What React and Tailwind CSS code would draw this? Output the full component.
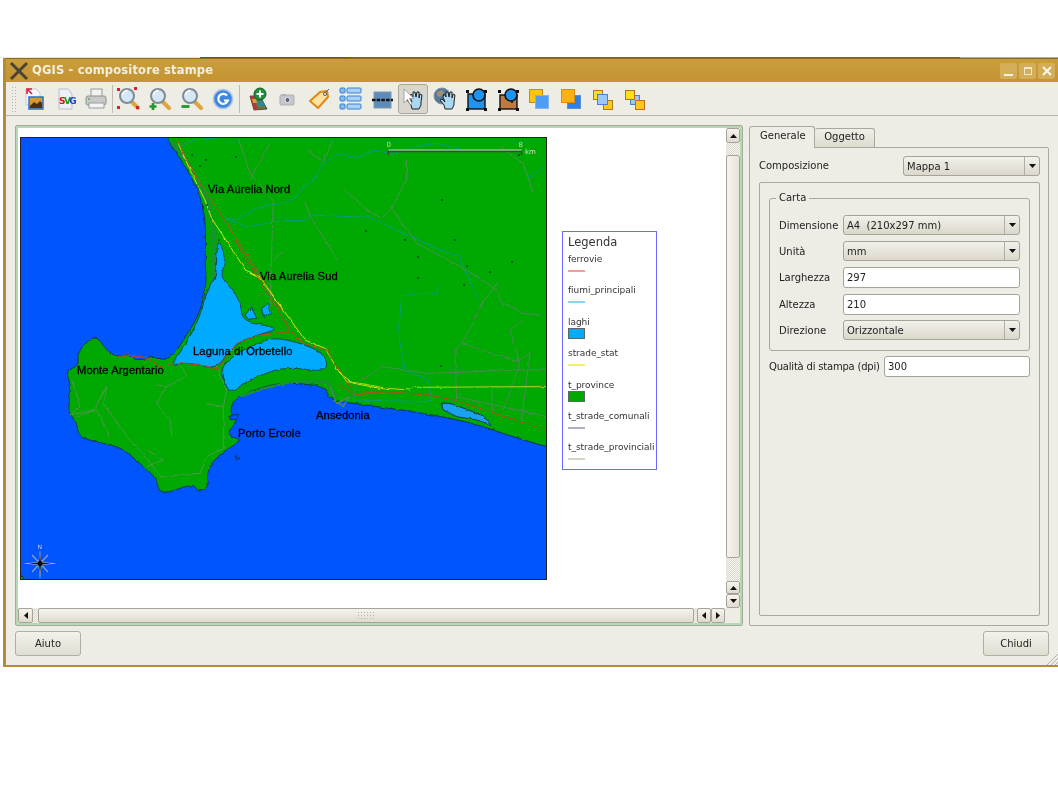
const Arrow = ({ dir = "down" }) => {
  const points = {
    down: "0,0 7,0 3.5,4",
    up: "0,4 7,4 3.5,0",
    left: "4,0 4,7 0,3.5",
    right: "0,0 0,7 4,3.5",
  };
  const vertical = dir === "down" || dir === "up";
  return (
    <svg width={vertical ? 7 : 4} height={vertical ? 4 : 7}>
      <polygon points={points[dir]} fill="#111" />
    </svg>
  );
};

const Icon = ({ children }) => (
  <svg width="26" height="26" viewBox="0 0 26 26">
    {children}
  </svg>
);

const Lens = ({ children }) => (
  <Icon>
    <line x1="16" y1="16" x2="22" y2="22" stroke="#dca640" strokeWidth="4" strokeLinecap="round" />
    <circle cx="11" cy="10" r="7" fill="#d5e6f4" stroke="#7f8c96" strokeWidth="2" />
    <path d="M6.5 9a5 5 0 0 1 5-4.5" stroke="#fff" strokeWidth="1.5" fill="none" />
    {children}
  </Icon>
);

const Hand = ({ x = 0 }) => (
  <path
    transform={`translate(${x} 0)`}
    d="M9 11l1-3 2 3 0-5 2 0 1 5 1-5 2 0 0 6 1-4 2 1-1 7 0 3-2 4-7 0-1-4-4-5 2-1 3 3z"
    fill="#a9d8f2"
    stroke="#222"
    strokeWidth="1"
    strokeLinejoin="round"
  />
);

const Handles = () => (
  <g fill="#111">
    <rect x="3" y="4" width="3" height="3" />
    <rect x="21" y="4" width="3" height="3" />
    <rect x="3" y="22" width="3" height="3" />
    <rect x="21" y="22" width="3" height="3" />
  </g>
);

const Square = ({ x, y, s, fill, stroke }) => (
  <rect x={x} y={y} width={s} height={s} fill={fill} stroke={stroke} strokeWidth="1" />
);

const toolIcons = [
  <Icon key="img">
    <path d="M6 3h10l4 4v12H6z" fill="#f4f6fa" stroke="#c3c8d2" />
    <path d="M7 3l5 5M7 8V3h5" stroke="#e0203a" strokeWidth="1.6" fill="none" />
    <rect x="9" y="11" width="14" height="12" fill="#d89a20" stroke="#2a6fd0" strokeWidth="1.5" />
    <path d="M10 20l4-4 3 2 3-3 2 2v5H10z" fill="#4a3210" />
  </Icon>,
  <Icon key="svg">
    <path d="M7 3h9l4 5v15H7z" fill="#eef0f6" stroke="#b9bdca" />
    <text x="7" y="18" fontSize="9" fontWeight="700" letterSpacing="-1.6" fontFamily="'DejaVu Sans',sans-serif">
      <tspan fill="#d01818">S</tspan>
      <tspan fill="#10a010">V</tspan>
      <tspan fill="#1840d8">G</tspan>
    </text>
  </Icon>,
  <Icon key="print">
    <rect x="8" y="3" width="11" height="8" fill="#f2f2f2" stroke="#9a9a9a" />
    <rect x="3" y="10" width="20" height="9" rx="2" fill="#c8c9c9" stroke="#8f8f8f" />
    <rect x="6" y="17" width="15" height="5" fill="#f4f4f4" stroke="#9a9a9a" />
    <circle cx="6" cy="13" r="1" fill="#52b04a" />
  </Icon>,
  <Lens key="full">
    <g fill="#d82030">
      <rect x="1" y="2" width="3" height="3" />
      <rect x="18" y="1" width="3" height="3" />
      <rect x="1" y="20" width="3" height="3" />
      <rect x="20" y="20" width="3" height="3" />
    </g>
  </Lens>,
  <Lens key="in">
    <path d="M6 17v7M2.5 20.5h7" stroke="#1f9a2a" strokeWidth="2.6" />
  </Lens>,
  <Lens key="out">
    <path d="M2.5 20.5h8" stroke="#1f9a2a" strokeWidth="2.8" />
  </Lens>,
  <Icon key="refresh">
    <circle cx="13" cy="13" r="9.5" fill="#3d86e2" stroke="#a9c4e4" strokeWidth="1.5" />
    <path d="M17 9.5a5 5 0 1 0 1 5h-4" stroke="#fff" strokeWidth="2.2" fill="none" />
  </Icon>,
  <Icon key="map">
    <polygon points="7,10 17,10 24,23 11,24" fill="#6b7a3a" stroke="#333" strokeWidth="0.8" />
    <polygon points="7,10 11,10 15,24 11,24" fill="#b03a3a" />
    <polygon points="13,15 20,15 22,20 15,20" fill="#2a8a9a" />
    <polygon points="9,13 13,13 14,17 10,17" fill="#d8a030" />
    <circle cx="17" cy="8" r="6" fill="#1e8f3a" stroke="#0f5a24" />
    <path d="M17 4.5v7M13.5 8h7" stroke="#fff" strokeWidth="2" />
  </Icon>,
  <Icon key="camera">
    <rect x="6" y="9" width="14" height="10" rx="1" fill="#c4c6cc" stroke="#aeb0b6" />
    <rect x="8" y="8" width="4" height="2" fill="#b0b2b8" />
    <circle cx="13.5" cy="14" r="2.5" fill="#5b6478" stroke="#e8e8ee" />
  </Icon>,
  <Icon key="tag">
    <path d="M4 15L14 6l7-1 1 6-10 11z" fill="#fde2a4" stroke="#e08a10" strokeWidth="2" strokeLinejoin="round" />
    <circle cx="19" cy="8" r="1.5" fill="#fff" stroke="#555" />
    <path d="M20 6l3-3" stroke="#666" />
  </Icon>,
  <Icon key="legend">
    {[5, 13, 21].map((y) => (
      <g key={y}>
        <rect x="3" y={y - 3} width="5" height="5" rx="1" fill="#7fbdf0" stroke="#3a80d0" />
        <rect x="10" y={y - 3} width="14" height="5" rx="1" fill="#a8d2f4" stroke="#3a80d0" />
      </g>
    ))}
  </Icon>,
  <Icon key="scale">
    <rect x="5" y="6" width="17" height="16" fill="#5e8cb8" stroke="#7a98b4" />
    <path d="M3 14h21" stroke="#111" strokeWidth="2.5" strokeDasharray="3.5 1.2" />
  </Icon>,
  <Icon key="select">
    <Hand x={1} />
    <path d="M4 3v14l3.5-3.5 2.5 5 2-1-2.5-5H14z" fill="#fff" stroke="#888" strokeWidth="0.7" />
  </Icon>,
  <Icon key="globe">
    <circle cx="10" cy="10" r="8" fill="#56799a" stroke="#7f92a4" />
    <path d="M5 6l5-2 2 3-4 4-3-1zM10 14l4 1-2 3z" fill="#a08f70" />
    <Hand x={2} />
  </Icon>,
  <Icon key="group">
    <rect x="5" y="8" width="17" height="15" fill="#1f93f0" stroke="#111" strokeWidth="1.4" />
    <circle cx="16" cy="9" r="6" fill="#1f93f0" stroke="#111" strokeWidth="1.6" />
    <Handles />
  </Icon>,
  <Icon key="ungroup">
    <rect x="5" y="9" width="17" height="14" fill="#c07a40" stroke="#111" strokeWidth="1.4" />
    <circle cx="16" cy="9" r="6" fill="#1f93f0" stroke="#111" strokeWidth="1.6" />
    <rect x="16" y="15" width="2" height="2" fill="#222" />
    <Handles />
  </Icon>,
  <Icon key="raise">
    <Square x={3.5} y={3.5} s={13} fill="#fcc60e" stroke="#c88a10" />
    <Square x={9.5} y={9.5} s={13} fill="#4f9cf5" stroke="#7fb4ec" />
  </Icon>,
  <Icon key="lower">
    <Square x={9.5} y={9.5} s={13} fill="#2f7fe8" stroke="#5f8fc8" />
    <Square x={3.5} y={3.5} s={13} fill="#fdb20e" stroke="#e08a10" />
  </Icon>,
  <Icon key="top">
    <Square x={4.5} y={4.5} s={9} fill="#fde018" stroke="#b07820" />
    <Square x={14.5} y={14.5} s={9} fill="#fdc818" stroke="#b07820" />
    <Square x={8.5} y={8.5} s={10} fill="#9cc8f8" stroke="#4a80d0" />
  </Icon>,
  <Icon key="bottom">
    <Square x={9.5} y={9.5} s={9} fill="#9cc8f8" stroke="#4a80d0" />
    <Square x={4.5} y={4.5} s={9} fill="#fde018" stroke="#c06a20" />
    <Square x={14.5} y={14.5} s={9} fill="#fdc818" stroke="#c06a20" />
  </Icon>,
];

const Separator = () => <div className="w-[1px] h-[28px] bg-[#bdbbb2] shrink-0" />;

const Slot = ({ active, children }) => (
  <div className="w-[31.5px] h-[30px] flex items-center justify-center shrink-0 relative">
    {active && <div className="absolute inset-[0_1px_0_1px] bg-[#d9d6cd] border border-[#a9a79e] rounded-[3px]" />}
    <div className="relative flex">{children}</div>
  </div>
);

const Toolbar = () => (
  <div className="h-[34px] shrink-0 border-b border-[#b5b3aa] flex items-center pl-[5px]">
    <div className="w-[6px] h-[26px] mr-[0.25px] bg-[radial-gradient(#b8b6ad_0.8px,transparent_1px)] bg-[length:3px_3px] shrink-0" />
    <div className="flex items-center">
      {toolIcons.slice(0, 3).map((icon, i) => <Slot key={i}>{icon}</Slot>)}
      <Separator />
      {toolIcons.slice(3, 7).map((icon, i) => <Slot key={i}>{icon}</Slot>)}
      <Separator />
      {toolIcons.slice(7).map((icon, i) => <Slot key={i} active={i === 5}>{icon}</Slot>)}
    </div>
  </div>
);

const TitleBar = () => (
  <div className="h-[24px] shrink-0 bg-linear-to-b from-[#c99e3c] to-[#c49431] border-t border-[#8d6a1c] flex items-center">
    <svg width="22" height="20" viewBox="0 0 22 20" className="ml-[2px] mr-[2px]">
      <path d="M3 2l16 16M19 2L3 18" stroke="#4a4336" strokeWidth="3" />
    </svg>
    <span className="text-[11.5px] font-bold text-[#f4eedd] tracking-[0.16px]">QGIS - compositore stampe</span>
    <div className="ml-auto mr-[3px] flex gap-[2px]">
      {["min", "max", "close"].map((name) => (
        <div key={name} className="w-[17px] h-[16px] rounded-[2px] bg-[#d3ad58] flex items-center justify-center">
          {name === "min" && <div className="w-[9px] h-[2px] mt-[8px] bg-[#f6f0de]" />}
          {name === "max" && <div className="w-[8px] h-[8px] border border-[#f0e6c8] border-t-2" />}
          {name === "close" && (
            <svg width="10" height="10">
              <path d="M1 1l8 8M9 1l-8 8" stroke="#fbf7ea" strokeWidth="2" />
            </svg>
          )}
        </div>
      ))}
    </div>
  </div>
);

const scrollBtn = "flex items-center justify-center border border-[#a5a39a] rounded-[2px] bg-linear-to-b from-[#f6f4ee] to-[#dedace] shrink-0";
const dotted = "bg-[repeating-conic-gradient(#d9d7cf_0_25%,#f7f6f1_0_50%)] bg-[length:2px_2px] shrink-0";

const VScroll = () => (
  <div className="w-[14px] flex flex-col">
    <div className={`h-[15px] ${scrollBtn}`}><Arrow dir="up" /></div>
    <div className={`h-[12px] ${dotted}`} />
    <div className="h-[403px] shrink-0 border border-[#a5a39a] rounded-[2px] bg-linear-to-r from-[#f5f3ec] to-[#e6e3d9]" />
    <div className={`h-[23px] ${dotted}`} />
    <div className={`h-[13px] ${scrollBtn}`}><Arrow dir="up" /></div>
    <div className={`h-[14px] ${scrollBtn}`}><Arrow dir="down" /></div>
  </div>
);

const HScroll = () => (
  <div className="h-[15px] flex bg-[#edece5]">
    <div className={`w-[15px] ${scrollBtn}`}><Arrow dir="left" /></div>
    <div className={`w-[5px] ${dotted}`} />
    <div className="w-[656px] shrink-0 border border-[#a5a39a] rounded-[2px] bg-linear-to-b from-[#f5f3ec] to-[#dfdbd0] flex items-center justify-center">
      <div className="w-[18px] h-[9px] bg-[radial-gradient(#b9b7ae_0.7px,transparent_1px)] bg-[length:3px_3px]" />
    </div>
    <div className={`w-[3px] ${dotted}`} />
    <div className={`w-[14px] ${scrollBtn}`}><Arrow dir="left" /></div>
    <div className={`w-[14px] ${scrollBtn}`}><Arrow dir="right" /></div>
  </div>
);

const mapLabels = [
  ["Via Aurelia Nord", 208, 193],
  ["Via Aurelia Sud", 260, 280],
  ["Laguna di Orbetello", 193, 355],
  ["Monte Argentario", 77, 374],
  ["Ansedonia", 316, 419],
  ["Porto Ercole", 238, 437],
];

// rounds off a polyline given as "x y, x y, ..." through the midpoints of its segments
const smooth = (str) => {
  const pts = str.split(",").map((p) => p.trim().split(" ").map(Number));
  const mid = (a, b) => [(a[0] + b[0]) / 2, (a[1] + b[1]) / 2];
  const start = mid(pts[pts.length - 1], pts[0]);
  let d = `M${start[0]} ${start[1]}`;
  pts.forEach((p, i) => {
    const m = mid(p, pts[(i + 1) % pts.length]);
    d += `Q${p[0]} ${p[1]} ${m[0]} ${m[1]}`;
  });
  return d + "Z";
};

const coast = smooth(
  "-300 -500, 315 -500, 315 -309, 351 -261, 399 -180, 429 -111, 438 -30, 435 70, 440 130, 425 200, 405 245, 370 300, 345 340, 315 362, 280 350, 265 355, 230 362, 200 340, 165 352, 130 318, 118 298, 100 292, 75 310, 50 345, 58 375, 16 395, 35 440, 22 515, 50 545, 55 590, 120 610, 180 620, 240 670, 290 715, 298 768, 400 730, 410 752, 448 745, 440 690, 480 640, 542 605, 530 590, 510 590, 505 575, 535 540, 510 520, 520 480, 580 450, 650 430, 720 430, 795 440, 810 480, 870 489, 1089 519, 1239 549, 1341 585, 1461 621, 1700 680, 1700 1300, -300 1300"
);
const lagoonN = smooth(
  "475 0, 490 30, 495 70, 482 110, 510 140, 545 190, 545 245, 665 265, 590 285, 520 315, 470 390, 400 370, 360 370, 330 380, 380 310, 420 230, 445 140, 468 115, 470 40"
);
const lagoonS = smooth("650 290, 770 325, 802 360, 797 397, 680 380, 600 405, 540 440, 505 458, 490 410, 485 380, 530 340, 590 310");
const burano = "M1145 490L1170 490L1220 508L1270 528L1295 555L1250 540L1190 530L1150 510Z";

const ponds = [
  [219, 240], [207, 205], [238, 186], [366, 231], [405, 240], [455, 240], [467, 266], [490, 272], [418, 257], [418, 278], [464, 285], [519, 155], [442, 200], [192, 155], [206, 160], [200, 166], [441, 366], [236, 157], [512, 262],
];

const MapView = () => (
  <svg width="527" height="443" viewBox="20 137 527 443" className="absolute left-[2px] top-[9px] bg-[#00a802]">
    <defs>
      <filter id="rough" filterUnits="userSpaceOnUse" x="-200" y="-400" width="1800" height="1500">
        <feTurbulence type="fractalNoise" baseFrequency="0.05" numOctaves="2" seed="4" />
        <feDisplacementMap in="SourceGraphic" scale="9" xChannelSelector="R" yChannelSelector="G" />
      </filter>
    </defs>
    <g transform="translate(60 240) scale(0.3333)" fill="none">
      <g filter="url(#rough)">
        <path d={coast} fill="#0055ff" stroke="#0a3550" strokeWidth="3" strokeLinejoin="round" />
        {/* fascia lungo la costa */}
        <path d="M330 -300L370 -250L420 -170L450 -100L462 -10L460 120L440 220L395 310L350 370" stroke="#1f8f3a" strokeWidth="8" />
        <path d="M540 470L610 445L700 425L800 425L830 470" stroke="#1f8f3a" strokeWidth="7" />
        <path d={lagoonN} fill="#00aaff" stroke="#0a4a50" strokeWidth="3" strokeLinejoin="round" />
        <path d={lagoonS} fill="#00aaff" stroke="#0a4a50" strokeWidth="3" strokeLinejoin="round" />
        <path d="M555 225L575 200L590 235L565 238ZM605 205L625 190L635 220L610 232Z" fill="#00aaff" stroke="#0a4a50" strokeWidth="3" />
        <path d={burano} fill="#1fa0f0" stroke="#0a3550" strokeWidth="3" />
        <path d="M510 528L535 522L532 538L512 540ZM525 645L540 655L532 660Z" fill="#0055ff" stroke="#0a3550" strokeWidth="3" />
        {/* strade sul promontorio */}
        <g stroke="#5f9458" strokeWidth="2.5" strokeLinejoin="round">
          <path d="M35 420L60 500L30 525L100 510L140 440L130 490L200 590L250 640L300 710L420 700L440 650L490 625L490 500L500 450L470 380" />
          <path d="M290 435L320 440L360 420L380 405L360 375M320 440L290 490L330 540L335 585" />
          <path d="M50 530L110 510L150 590M260 630L310 660L260 680M440 490L490 500" />
        </g>
        <path d="M810 440L830 490L870 470L850 500L820 480" stroke="#4d8a55" strokeWidth="4" strokeLinejoin="round" />
        {/* fiumi e strade a nord, coordinate del primo riquadro */}
        <g transform="translate(270 -330)" strokeLinejoin="round">
          <g stroke="#0a9a9a" strokeWidth="2.5">
            <path d="M90 50L130 30L200 25M225 265L260 270L320 235L360 225L405 220L440 200L460 170L490 150L520 100L570 70L620 85L670 60L730 72L790 50L860 40L940 60" />
            <path d="M225 265L290 290L400 272L470 272L480 255L600 260L650 258L720 290L780 320L840 345L900 372L930 380L945 420L985 505" />
            <path d="M1120 110L1140 145L1190 105M755 500L800 490L860 490L865 460" />
          </g>
          <g stroke="#4f9050" strokeWidth="3">
            <path d="M265 25L300 130L370 210L365 370L360 535M300 150L360 40M465 215L480 260L565 390M400 365L370 390" />
            <path d="M580 175L650 240L695 265L725 235M470 60L520 95L550 30" />
            <path d="M725 235L800 340L950 420L1040 480L1060 530M770 90L770 150L725 235M990 530L1045 455" />
            <path d="M1050 50L1120 100L1150 190" />
          </g>
          <path d="M85 40L120 120L165 210L185 265L290 425L330 440L400 540" stroke="#d8e010" strokeWidth="3" />
          <path d="M80 25L120 110L230 280L395 540" stroke="#a85a20" strokeWidth="3" />
        </g>
        <path d="M570 100L600 115L670 210L735 300L795 325L840 400L880 430L960 445" stroke="#d8e010" strokeWidth="3" />
        <path d="M525 0L690 270L730 310L800 330L885 462L960 455M690 275L600 285L530 310L470 390L440 378L360 368L300 380L260 355L200 345L170 352" stroke="#b05020" strokeWidth="3" />
        {/* parte est */}
        <g transform="translate(840 180)" strokeLinejoin="round">
          <g stroke="#4d8a55" strokeWidth="3">
            <path d="M350 300L345 145L365 130L440 155L530 185L570 160L545 365M365 130L400 70L430 0M350 290L620 350M455 260L458 340M490 330L540 190L510 90L550 60" />
            <path d="M490 5L545 40L600 45M45 255L80 230L125 200L260 220L620 208" />
          </g>
          <path d="M185 0L175 95L195 210L265 240L275 305L40 300L50 255" stroke="#0a9a9a" strokeWidth="2.5" />
          <path d="M0 215L20 245L60 250L140 265L210 270L220 262L618 260" stroke="#b8d810" strokeWidth="3" />
          <path d="M0 255L45 285L130 275L270 285L340 300L450 335L618 392" stroke="#b05020" strokeWidth="3" />
        </g>
      </g>
    </g>
    {ponds.map(([x, y]) => (
      <circle key={`${x}-${y}`} cx={x} cy={y} r="0.9" fill="#0a3a40" />
    ))}
    {mapLabels.map(([label, x, y]) => (
      <text key={label} x={x} y={y} fontSize="11.2" fill="#000" stroke="#000" strokeWidth="0.3" fontFamily="'Liberation Sans',sans-serif" letterSpacing="0.1">
        {label}
      </text>
    ))}
    {/* barra di scala */}
    <path d="M388.5 155v-3.5h133v3.5" fill="none" stroke="#444" strokeWidth="1.6" />
    <path d="M388.5 150h133" stroke="#c8d0c0" strokeWidth="1" />
    <text x="386.5" y="147" fontSize="7" fill="#c9d4c4" fontFamily="'DejaVu Sans',sans-serif">0</text>
    <text x="518.5" y="147" fontSize="7" fill="#c9d4c4" fontFamily="'DejaVu Sans',sans-serif">8</text>
    <text x="525" y="154" fontSize="7" fill="#d5ded0" fontFamily="'DejaVu Sans',sans-serif">km</text>
    {/* rosa dei venti */}
    <g>
      <text x="37.5" y="549" fontSize="6" fill="#c4d0e8" fontFamily="'DejaVu Sans',sans-serif">N</text>
      <path d="M40 550L41.5 562L57 563.5L41.5 565L40 580L38.5 565L23 563.5L38.5 562Z" fill="#c0c8d8" />
      <path d="M32 555L40 563.5L48 555M32 572L40 563.5L48 572" stroke="#8ea0c0" strokeWidth="1.2" fill="none" />
      <path d="M40 552L41 562.5L52 563.5L41 564.5L40 576L39 564.5L28 563.5L39 562.5Z" fill="#111" />
      <circle cx="40" cy="563.5" r="2.5" fill="#000" />
    </g>
    <rect x="20.5" y="137.5" width="526" height="442" fill="none" stroke="#222" />
  </svg>
);

const legendItems = [
  ["ferrovie", "line", "#f79a9a"],
  ["fiumi_principali", "line", "#8ad4f8"],
  ["laghi", "box", "#00aaff"],
  ["strade_stat", "line", "#f4f070"],
  ["t_province", "box", "#00a802"],
  ["t_strade_comunali", "line", "#b0b0c8"],
  ["t_strade_provinciali", "line", "#d4d4c0"],
];

const Legend = () => (
  <div className="absolute left-[544px] top-[103px] w-[95px] h-[239px] border border-[#6a6aff] pl-[5px] pt-[3px] overflow-hidden text-[#333]">
    <div className="text-[11.5px] leading-[15px] h-[19px]">Legenda</div>
    {legendItems.map(([name, type, color]) => (
      <div key={name} className="h-[31.4px]">
        <div className="text-[9px] leading-[11px] whitespace-nowrap tracking-[-0.05px]">{name}</div>
        {type === "line" ? (
          <div className="w-[17px] h-[2px] mt-[5px]" style={{ backgroundColor: color }} />
        ) : (
          <div className="w-[17px] h-[11px] border border-[#5a6a60]" style={{ backgroundColor: color }} />
        )}
      </div>
    ))}
  </div>
);

const CanvasPanel = () => (
  <div className="w-[728px] h-[501px] shrink-0 border border-[#a9a89f] rounded-[2px]">
    <div className="h-full border-2 border-[#b6dab0] flex flex-col bg-white">
      <div className="flex h-[480px]">
        <div className="w-[708px] relative bg-white">
          <MapView />
          <Legend />
        </div>
        <VScroll />
      </div>
      <HScroll />
    </div>
  </div>
);

const Combo = ({ value, className }) => (
  <div className={`h-[20px] flex border border-[#a5a39a] rounded-[3px] bg-linear-to-b from-[#f3f1ea] to-[#dbd7cb] text-[10px] text-[#222] ${className}`}>
    <div className="flex-1 pl-[3px] leading-[19px] whitespace-pre">{value}</div>
    <div className="w-[15px] border-l border-[#b0aea4] flex items-center justify-center"><Arrow /></div>
  </div>
);

const TextBox = ({ value, className }) => (
  <div className={`border border-[#a5a39a] rounded-[3px] bg-white pl-[3px] text-[10px] text-[#222] flex items-center ${className}`}>{value}</div>
);

const Row = ({ label, mt, children }) => (
  <div className="flex items-center" style={{ marginTop: mt }}>
    <div className="w-[64px] text-[10px] text-[#222] whitespace-nowrap">{label}</div>
    <div className="w-[177px]">{children}</div>
  </div>
);

const SidePanel = () => (
  <div className="flex-1 flex flex-col h-[501px]">
    <div className="flex h-[22px] items-end text-[10px] text-[#222]">
      <div className="w-[66px] h-[22px] border border-b-0 border-[#a9a89f] rounded-t-[3px] bg-[#edece5] pl-[10px] pt-[1px] relative z-10 -mb-px">Generale</div>
      <div className="w-[60px] h-[19px] border border-b-0 border-l-0 border-[#a9a89f] rounded-t-[3px] bg-linear-to-b from-[#f0eee7] to-[#dedbd0] text-center pt-[0px]">Oggetto</div>
    </div>
    <div className="flex-1 border border-[#a9a89f] rounded-[2px] pl-[9px] pr-[8px] pb-[9px] flex flex-col">
      <div className="flex items-center justify-between mt-[8px] shrink-0">
        <span className="text-[10px] text-[#222] -mt-[1px]">Composizione</span>
        <Combo value="Mappa 1" className="w-[137px]" />
      </div>
      <div className="flex-1 mt-[6px] border border-[#a9a89f] rounded-[2px] px-[9px] pt-[15px]">
        <div className="relative h-[153px] border border-[#a9a89f] rounded-[3px] px-[9px] pt-[16px]">
          <div className="absolute left-[6px] -top-[7px] bg-[#edece5] px-[3px] text-[10px] leading-[12px] text-[#222]">Carta</div>
          <Row label="Dimensione" mt={0}><Combo value="A4  (210x297 mm)" /></Row>
          <Row label="Unità" mt={6}><Combo value="mm" /></Row>
          <Row label="Larghezza" mt={6}><TextBox value="297" className="h-[21px]" /></Row>
          <Row label="Altezza" mt={6}><TextBox value="210" className="h-[21px]" /></Row>
          <Row label="Direzione" mt={5}><Combo value="Orizzontale" /></Row>
        </div>
        <div className="flex items-center mt-[5px]">
          <div className="w-[115px] text-[10px] text-[#222] whitespace-nowrap tracking-[-0.2px]">Qualità di stampa (dpi)</div>
          <TextBox value="300" className="w-[146px] h-[21px]" />
        </div>
      </div>
    </div>
  </div>
);

const PushButton = ({ children }) => (
  <div className="w-[66px] h-[25px] border border-[#b0aea4] rounded-[3px] bg-linear-to-b from-[#f3f1ea] to-[#e0ddd2] flex items-center justify-center text-[10px] text-[#222]">
    {children}
  </div>
);

export default function App() {
  return (
    <div className="w-[1058px] h-[794px] bg-white overflow-hidden font-['DejaVu_Sans',sans-serif] blur-[0.35px]">
      <div className="h-[57px]" />
      <div className="h-[1px] flex">
        <div className="w-[200px] bg-[#e6e6e6]" />
        <div className="w-[150px] bg-[#1a5fd0]" />
        <div className="w-[610px] bg-[#2a8a2a]" />
        <div className="flex-1 bg-[#b0b0b0]" />
      </div>
      <div className="ml-[3px] w-[1055px] h-[609px] border-l-[3px] border-b-[2px] border-[#b48c35] bg-[#edece5] flex flex-col relative">
        <TitleBar />
        <Toolbar />
        <div className="flex gap-[6px] px-[9px] pt-[9px]">
          <CanvasPanel />
          <SidePanel />
        </div>
        <div className="flex justify-between px-[9px] pt-[5px]">
          <PushButton>Aiuto</PushButton>
          <PushButton>Chiudi</PushButton>
        </div>
        <svg width="12" height="12" className="absolute right-0 bottom-0">
          <path d="M12 1L1 12M12 5L5 12M12 9L9 12" stroke="#b5b3aa" />
        </svg>
      </div>
    </div>
  );
}
